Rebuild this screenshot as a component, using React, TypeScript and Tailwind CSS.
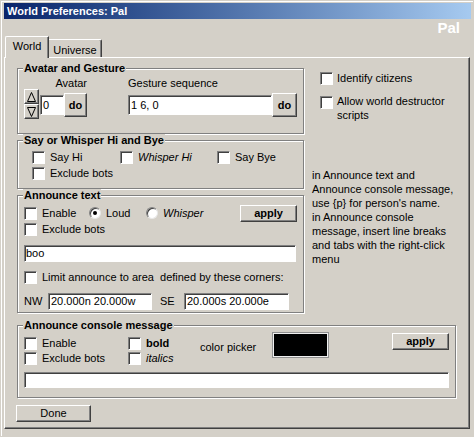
import type { ReactNode } from "react";

const raised =
  "bg-[#d4d0c8] border border-t-white border-l-white border-r-[#404040] border-b-[#404040] shadow-[inset_-1px_-1px_0_#808080]";
const sunken =
  "bg-white border border-t-[#808080] border-l-[#808080] border-r-white border-b-white shadow-[inset_1px_1px_0_#404040]";

const Box = () => <span className={`w-[13px] h-[13px] shrink-0 ${sunken}`} />;

const Check = ({ children, className = "" }: { children: ReactNode; className?: string }) => (
  <div className={`flex items-center gap-[5px] ${className}`}>
    <Box />
    <span className="whitespace-nowrap">{children}</span>
  </div>
);

const Radio = ({ on, children, className = "" }: { on?: boolean; children: ReactNode; className?: string }) => (
  <div className={`flex items-center gap-[5px] ${className}`}>
    <span className="w-[12px] h-[12px] shrink-0 rounded-full bg-white border border-t-[#808080] border-l-[#808080] border-r-[#e8e8e8] border-b-[#e8e8e8] shadow-[inset_1px_1px_0_#404040] flex items-center justify-center">
      {on && <span className="w-[4px] h-[4px] rounded-full bg-black" />}
    </span>
    <span className="whitespace-nowrap">{children}</span>
  </div>
);

const Btn = ({ children, className = "" }: { children: ReactNode; className?: string }) => (
  <div className={`flex items-center justify-center ${raised} ${className}`}>{children}</div>
);

const Field = ({ value = "", className = "" }: { value?: string; className?: string }) => (
  <div className={`flex items-center pl-[2px] whitespace-nowrap overflow-hidden ${sunken} ${className}`}>{value}</div>
);

const Group = ({ title, className = "", children }: { title: string; className?: string; children: ReactNode }) => (
  <fieldset className={`border border-[#808080] shadow-[inset_1px_1px_0_#fff,1px_1px_0_#fff] ${className}`}>
    <legend className="ml-[5px] px-[1px] font-bold leading-[13px] bg-[#d4d0c8]">{title}</legend>
    {children}
  </fieldset>
);

const Arrow = ({ up }: { up?: boolean }) => (
  <Btn className="w-[15px] h-[15px]">
    <svg width="9" height="10" viewBox="0 0 9 10">
      <polygon
        points={up ? "4.5,0.5 8.5,9.5 0.5,9.5" : "0.5,0.5 8.5,0.5 4.5,9.5"}
        fill="none"
        stroke="#000"
        strokeWidth="1"
      />
    </svg>
  </Btn>
);

export default function App() {
  return (
    <div className="w-[474px] h-[437px] overflow-hidden bg-[#d4d0c8] text-black text-[11px] leading-[13px] font-['Liberation_Sans',Arial,sans-serif]">
      <div className="m-[1px] h-[435px] border-t border-l border-white flex flex-col">
        {/* title bar */}
        <div className="mt-[1px] mx-[2px] h-[16px] shrink-0 bg-linear-to-r from-[#0a246a] to-[#a6caf0] pl-[3px] flex items-center text-white font-bold">
          World Preferences: Pal
        </div>
        <div className="h-[17px] shrink-0 flex justify-end pr-[13px] text-[15px] leading-[17px] font-bold text-white">
          Pal
        </div>

        {/* tabs */}
        <div className="h-[21px] shrink-0 flex items-end pl-[3px]">
          <div className="relative z-10 -mb-px w-[44px] h-[22px] pt-[3px] text-center bg-[#d4d0c8] border-t border-l border-r border-t-white border-l-white border-r-[#404040] rounded-tl-[2px] shadow-[inset_-1px_0_0_#808080]">
            World
          </div>
          <div className="w-[53px] h-[18px] pt-[4px] text-center bg-[#d4d0c8] border-t border-r border-t-white border-r-[#404040] rounded-tr-[2px] shadow-[inset_-1px_0_0_#808080]">
            Universe
          </div>
        </div>

        {/* tab panel */}
        <div className="ml-[2px] w-[466px] h-[372px] shrink-0 pl-[12px] pt-[4px] bg-[#d4d0c8] border border-t-white border-l-white border-r-[#404040] border-b-[#404040] shadow-[inset_-1px_-1px_0_#808080] flex flex-col">
          <div className="flex">
            <div className="w-[287px] flex flex-col">
              <Group title="Avatar and Gesture">
                <div className="flex items-start pt-[2px] pb-[14px]">
                  <div className="ml-[6px] mt-[12px] flex flex-col">
                    <Arrow up />
                    <Arrow />
                  </div>
                  <div className="ml-[1px] flex flex-col">
                    <div className="h-[13px] mb-[3px] text-right">Avatar</div>
                    <div className="flex items-center">
                      <Field value="0" className="w-[24px] h-[20px]" />
                      <Btn className="w-[23px] h-[24px] font-bold">do</Btn>
                    </div>
                  </div>
                  <div className="ml-[41px] flex flex-col">
                    <div className="h-[13px] mb-[3px]">Gesture sequence</div>
                    <div className="flex items-center">
                      <Field value="1 6, 0" className="w-[144px] h-[20px]" />
                      <Btn className="w-[25px] h-[24px] font-bold">do</Btn>
                    </div>
                  </div>
                </div>
              </Group>

              <Group title="Say or Whisper Hi and Bye">
                <div className="pt-[2px] pb-[7px] pl-[14px]">
                  <div className="flex items-center h-[16px]">
                    <Check className="w-[88px]">Say Hi</Check>
                    <Check className="w-[97px]">
                      <i>Whisper Hi</i>
                    </Check>
                    <Check>Say Bye</Check>
                  </div>
                  <div className="flex items-center h-[16px]">
                    <Check>Exclude bots</Check>
                  </div>
                </div>
              </Group>

              <Group title="Announce text">
                <div className="pt-[3px] pb-[2px] pl-[6px] pr-[6px]">
                  <div className="flex items-center h-[16px]">
                    <Check className="w-[65px]">Enable</Check>
                    <Radio on className="w-[57px]">
                      Loud
                    </Radio>
                    <Radio>
                      <i>Whisper</i>
                    </Radio>
                    <Btn className="ml-auto w-[57px] h-[17px] font-bold">apply</Btn>
                  </div>
                  <div className="flex items-center h-[16px]">
                    <Check>Exclude bots</Check>
                  </div>
                  <Field value="boo" className="mt-[8px] w-[272px] h-[17px] !pl-[1px]" />
                  <div className="mt-[7px] flex items-center h-[16px]">
                    <Check>Limit announce to area&nbsp; defined by these corners:</Check>
                  </div>
                  <div className="mt-[8px] flex items-center">
                    <span className="w-[24px]">NW</span>
                    <Field value="20.000n 20.000w" className="w-[104px] h-[17px]" />
                    <span className="ml-[8px] w-[24px]">SE</span>
                    <Field value="20.000s 20.000e" className="w-[105px] h-[17px]" />
                  </div>
                </div>
              </Group>
            </div>

            <div className="ml-[8px] flex flex-col">
              <div className="mt-[8px] pl-[8px] h-[16px] flex items-center gap-[4px]">
                <Box />
                <span>Identify citizens</span>
              </div>
              <div className="mt-[8px] pl-[8px] flex items-start gap-[4px]">
                <span className="mt-[2px] flex">
                  <Box />
                </span>
                <span className="leading-[14px]">
                  Allow world destructor
                  <br />
                  scripts
                </span>
              </div>
              <p className="mt-[46px] leading-[14px] whitespace-nowrap">
                in Announce text and
                <br />
                Announce console message,
                <br />
                use {"{p}"} for person's name.
                <br />
                in Announce console
                <br />
                message, insert line breaks
                <br />
                and tabs with the right-click
                <br />
                menu
              </p>
            </div>
          </div>

          <Group title="Announce console message" className="mt-[6px] w-[439px]">
            <div className="flex items-start">
              <div className="ml-[6px] mt-[4px] w-[104px] flex flex-col">
                <Check className="h-[15px]">Enable</Check>
                <Check className="h-[15px]">Exclude bots</Check>
              </div>
              <div className="mt-[4px] w-[72px] flex flex-col">
                <Check className="h-[15px]">
                  <b>bold</b>
                </Check>
                <Check className="h-[15px]">
                  <i>italics</i>
                </Check>
              </div>
              <span className="mt-[9px] w-[73px]">color picker</span>
              <div className="mt-[1px] w-[55px] h-[24px] bg-black border border-t-[#f0f0f0] border-l-[#f0f0f0] border-r-[#f0f0f0] border-b-[#f0f0f0] shadow-[0_0_0_1px_#909090]" />
              <Btn className="mt-[1px] ml-[64px] w-[57px] h-[17px] font-bold">apply</Btn>
            </div>
            <Field className="mt-[6px] mb-[9px] ml-[6px] w-[425px] h-[16px]" />
          </Group>

          <Btn className="mt-[7px] -ml-px w-[75px] h-[17px]">Done</Btn>
        </div>
      </div>
    </div>
  );
}
